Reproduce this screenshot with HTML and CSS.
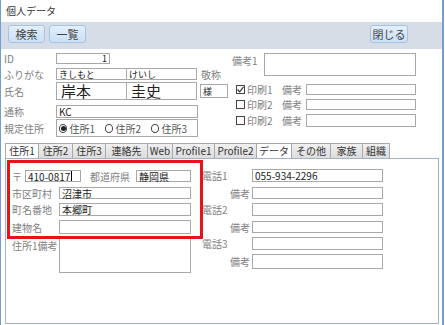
FILE: index.html
```html
<!DOCTYPE html>
<html lang="ja">
<head>
    <meta charset="UTF-8">
    <title>個人データ</title>
    <link rel="stylesheet" href="styles.css">
</head>
<body>
<div class="window">
    <div class="titlebar">個人データ</div>

    <div class="toolbar">
        <button class="btn">検索</button>
        <button class="btn">一覧</button>
        <span class="spacer"></span>
        <button class="btn btn-close">閉じる</button>
    </div>

    <div class="head">
        <div class="head-left">
            <div class="row r-id">
                <span class="lbl">ID</span>
                <span class="fld f-id">1</span>
            </div>
            <div class="row r-kana">
                <span class="lbl">ふりがな</span>
                <span class="fld f-half f-small">きしもと</span>
                <span class="fld f-half f-join f-small">けいし</span>
                <span class="lbl lbl-keisho">敬称</span>
            </div>
            <div class="row r-name">
                <span class="lbl">氏名</span>
                <span class="fld f-half f-big">岸本</span>
                <span class="fld f-half f-join f-big">圭史</span>
                <span class="fld f-sama">様</span>
            </div>
            <div class="row r-tsusho">
                <span class="lbl">通称</span>
                <span class="fld f-wide">KC</span>
            </div>
            <div class="row r-kitei">
                <span class="lbl">規定住所</span>
                <span class="fld f-wide radios">
                    <span class="radio on"></span><span class="rtxt">住所1</span>
                    <span class="radio"></span><span class="rtxt">住所2</span>
                    <span class="radio"></span><span class="rtxt">住所3</span>
                </span>
            </div>
        </div>

        <div class="head-right">
            <div class="row r-biko1">
                <span class="lbl lbl-biko1">備考1</span>
                <span class="fld f-biko1"></span>
            </div>
            <div class="checks">
                <div class="row r-check">
                    <span class="chk on">
                        <svg width="7" height="7" viewBox="0 0 7 7"><path d="M0.5 3.5 L2.7 5.8 L6.5 0.8" fill="none" stroke="#333" stroke-width="1.2"/></svg>
                    </span>
                    <span class="ctxt">印刷1</span>
                    <span class="lbl lbl-cb">備考</span>
                    <span class="fld f-cb"></span>
                </div>
                <div class="row r-check">
                    <span class="chk"></span>
                    <span class="ctxt">印刷2</span>
                    <span class="lbl lbl-cb">備考</span>
                    <span class="fld f-cb"></span>
                </div>
                <div class="row r-check r-check-last">
                    <span class="chk"></span>
                    <span class="ctxt">印刷2</span>
                    <span class="lbl lbl-cb">備考</span>
                    <span class="fld f-cb"></span>
                </div>
            </div>
        </div>
    </div>

    <ul class="tabs">
        <li class="tab selected" style="width: 34px">住所1</li>
        <li class="tab" style="width: 35px">住所2</li>
        <li class="tab" style="width: 34px">住所3</li>
        <li class="tab" style="width: 43px">連絡先</li>
        <li class="tab" style="width: 26px">Web</li>
        <li class="tab" style="width: 43px">Profile1</li>
        <li class="tab" style="width: 43px">Profile2</li>
        <li class="tab white" style="width: 36px">データ</li>
        <li class="tab" style="width: 40px">その他</li>
        <li class="tab" style="width: 33px">家族</li>
        <li class="tab" style="width: 28px">組織</li>
    </ul>

    <div class="panel">
        <div class="addr">
            <div class="row r-zip">
                <span class="lbl">〒</span>
                <span class="fld f-zip">410-0817<i class="caret"></i></span>
                <span class="lbl lbl-pref">都道府県</span>
                <span class="fld f-pref">静岡県</span>
            </div>
            <div class="row r-a1">
                <span class="lbl lbl-addr">市区町村</span>
                <span class="fld f-addr">沼津市</span>
            </div>
            <div class="row r-a2">
                <span class="lbl lbl-addr">町名番地</span>
                <span class="fld f-addr">本郷町</span>
            </div>
            <div class="row r-a3">
                <span class="lbl lbl-addr">建物名</span>
                <span class="fld f-addr"></span>
            </div>
            <div class="row r-a4">
                <span class="lbl lbl-addr">住所1備考</span>
                <span class="fld f-addr f-memo"></span>
            </div>
        </div>

        <div class="tel">
            <div class="row r-t1">
                <span class="lbl lbl-tel">電話1</span>
                <span class="fld f-tel">055-934-2296</span>
            </div>
            <div class="row r-t2">
                <span class="lbl lbl-tel lbl-r">備考</span>
                <span class="fld f-tel"></span>
            </div>
            <div class="row r-t3">
                <span class="lbl lbl-tel">電話2</span>
                <span class="fld f-tel"></span>
            </div>
            <div class="row r-t4">
                <span class="lbl lbl-tel lbl-r">備考</span>
                <span class="fld f-tel"></span>
            </div>
            <div class="row r-t5">
                <span class="lbl lbl-tel">電話3</span>
                <span class="fld f-tel"></span>
            </div>
            <div class="row r-t6">
                <span class="lbl lbl-tel lbl-r">備考</span>
                <span class="fld f-tel f-tel-last"></span>
            </div>
        </div>

        <!-- 注目枠 -->
        <div class="mark"></div>
    </div>
</div>
</body>
</html>
```

FILE: styles.css
```css
*{
    padding: 0;
    margin: 0;
    box-sizing: border-box;
}
body{
    background: #fff;
    font-family: "Noto Sans CJK JP", "Liberation Sans", sans-serif;
    font-size: 10px;
    line-height: 11px;
    color: #333;
}
.window{
    width: 444px;
    height: 325px;
    border-left: 1px solid #6f9fd3;
    border-right: 2px solid #6f9fd3;
    overflow: hidden;
}
.titlebar{
    height: 22px;
    line-height: 22px;
    padding-left: 5px;
    font-size: 10px;
    color: #333;
}

/* ツールバー */
.toolbar{
    height: 27px;
    background: #d6dde6;
    display: flex;
    align-items: flex-start;
    padding: 3px 34px 0 7px;
    gap: 4px;
}
.spacer{
    flex: 1;
}
.btn{
    width: 37px;
    height: 18px;
    border: 1px solid #a7c3e3;
    border-radius: 3px;
    background: linear-gradient(#e4effa, #cadff6);
    font-family: inherit;
    font-size: 11px;
    color: #444;
    line-height: 16px;
}
.btn-close{
    width: 38px;
}

/* 共通 */
.row{
    display: flex;
    align-items: center;
}
.lbl{
    color: #808080;
    white-space: nowrap;
}
.fld{
    border: 1px solid #a8a8a8;
    background: #fff;
    color: #222;
    display: flex;
    align-items: center;
    padding-left: 2px;
    line-height: 9px;
    white-space: nowrap;
}

/* 上部 */
.head{
    height: 94px;
    display: flex;
}
.head-left{
    width: 231px;
    padding-left: 3px;
}
.head-left .lbl{
    width: 52px;
}
.r-id{
    margin-top: 4px;
    height: 11px;
}
.f-id{
    width: 54px;
    height: 11px;
    font-size: 9px;
    justify-content: flex-end;
    padding-right: 2px;
}
.r-kana{
    margin-top: 4px;
    height: 12px;
}
.f-half{
    width: 71px;
    height: 12px;
}
.f-small{
    font-size: 9px;
}
.f-join{
    margin-left: -1px;
}
.head-left .lbl-keisho{
    width: auto;
    margin-left: 4px;
}
.r-name{
    margin-top: 2px;
    height: 18px;
}
.f-big{
    height: 18px;
    font-size: 15px;
    line-height: 16px;
    padding-left: 4px;
}
.f-sama{
    width: 28px;
    height: 14px;
    margin-left: 3px;
    font-size: 9px;
}
.r-tsusho{
    margin-top: 5px;
    height: 13px;
}
.f-wide{
    width: 142px;
    height: 13px;
}
.r-kitei{
    margin-top: 1px;
    height: 18px;
}
.radios{
    height: 18px;
    padding-left: 2px;
    color: #555;
}
.radio{
    width: 9px;
    height: 9px;
    border: 1px solid #444;
    border-radius: 50%;
    margin-right: 2px;
    display: flex;
    align-items: center;
    justify-content: center;
}
.radio.on::after{
    content: "";
    width: 5px;
    height: 5px;
    border-radius: 50%;
    background: #222;
}
.rtxt{
    margin-right: 10px;
}

.head-right{
    flex: 1;
}
.r-biko1{
    margin-top: 4px;
    align-items: flex-start;
}
.lbl-biko1{
    width: 32px;
    margin-top: 2px;
}
.f-biko1{
    width: 152px;
    height: 23px;
}
.checks{
    margin-top: 8px;
    padding-left: 4px;
    display: flex;
    flex-direction: column;
    gap: 4px;
}
.r-check{
    height: 11px;
}
.r-check-last{
    height: 13px;
}
.chk{
    width: 9px;
    height: 9px;
    border: 1px solid #444;
    display: flex;
    align-items: center;
    justify-content: center;
    background: #fff;
}
.ctxt{
    width: 35px;
    margin-left: 2px;
    color: #808080;
}
.lbl-cb{
    width: 24px;
}
.f-cb{
    width: 110px;
    height: 100%;
}

/* タブ */
.tabs{
    list-style: none;
    display: flex;
    margin-left: 4px;
    height: 15px;
}
.tab{
    height: 15px;
    border: 1px solid #a9a9a9;
    border-bottom: none;
    margin-right: -1px;
    background: linear-gradient(#f0f0f0, #dcdcdc);
    text-align: center;
    line-height: 14px;
    font-size: 10px;
    color: #333;
    white-space: nowrap;
}
.tab.selected,
.tab.white{
    background: #fff;
}

/* タブの中身 */
.panel{
    position: relative;
    margin-left: 4px;
    width: 434px;
    height: 166px;
    border: 1px solid #9fb4cc;
    display: flex;
}
.addr{
    width: 196px;
    padding-left: 6px;
    padding-top: 11px;
}
.lbl-addr{
    width: 47px;
}
.r-zip{
    height: 12px;
}
.f-zip{
    width: 56px;
    height: 12px;
    margin-left: 3px;
}
.caret{
    width: 1px;
    height: 10px;
    background: #000;
    margin-left: 1px;
}
.lbl-pref{
    margin-left: 9px;
    width: 46px;
}
.f-pref{
    width: 55px;
    height: 12px;
}
.f-addr{
    width: 132px;
    height: 12px;
}
.r-a1{
    margin-top: 5px;
}
.r-a2{
    margin-top: 4px;
}
.r-a2 .f-addr{
    height: 13px;
}
.r-a3{
    margin-top: 4px;
}
.r-a3 .f-addr{
    height: 14px;
}
.r-a4{
    margin-top: 4px;
    align-items: flex-start;
}
.r-a4 .lbl{
    margin-top: 2px;
}
.f-memo{
    height: 35px;
}

.tel{
    padding-top: 10px;
}
.lbl-tel{
    width: 50px;
}
.lbl-r{
    text-align: right;
    padding-right: 2px;
}
.f-tel{
    width: 131px;
    height: 13px;
}
.r-t2, .r-t4{
    margin-top: 5px;
}
.r-t3, .r-t5, .r-t6{
    margin-top: 4px;
}
.r-t2 .f-tel, .r-t4 .f-tel{
    height: 12px;
}
.f-tel-last{
    height: 15px;
}

.mark{
    position: absolute;
    left: 1px;
    top: 1px;
    width: 196px;
    height: 79px;
    border: 3px solid #e8121b;
}
```
